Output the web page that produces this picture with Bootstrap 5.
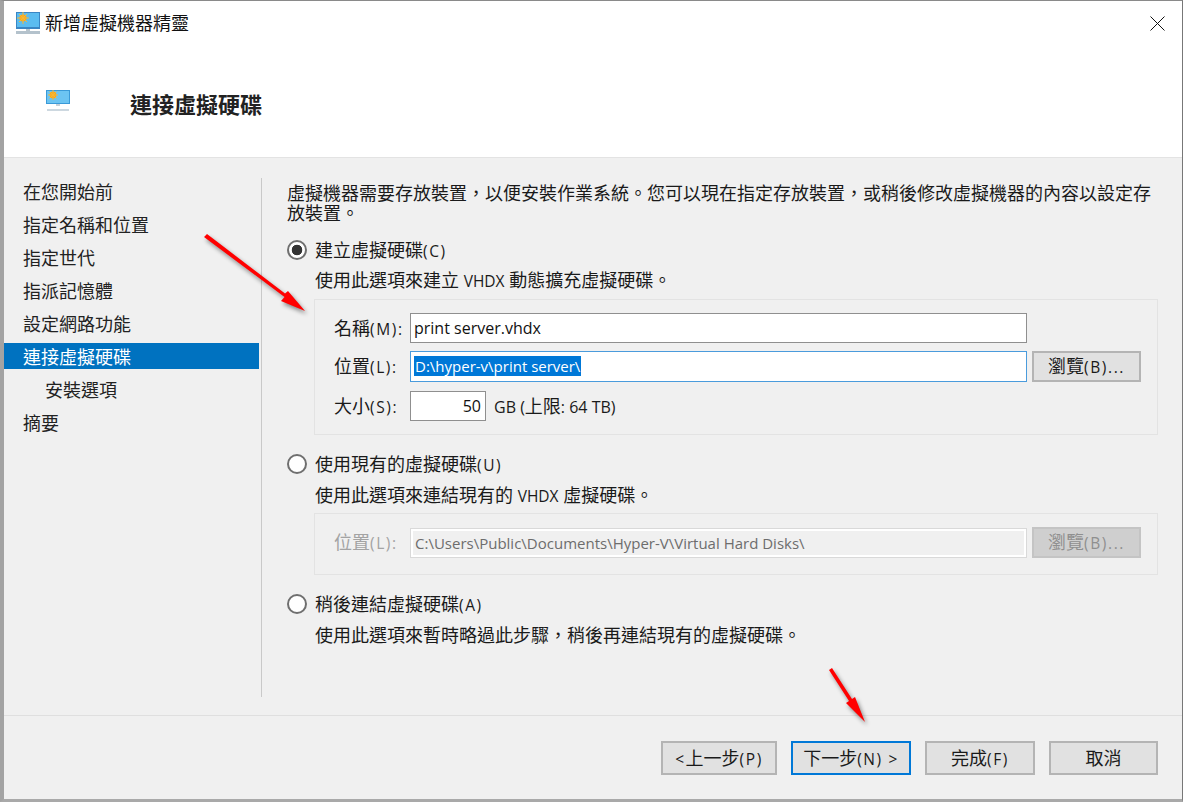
<!DOCTYPE html>
<html lang="zh-Hant">
<head>
<meta charset="utf-8">
<title>新增虛擬機器精靈</title>
<link href="https://cdn.jsdelivr.net/npm/bootstrap@5.3.0/dist/css/bootstrap.min.css" rel="stylesheet">
<style>
html,body{margin:0;height:802px;overflow:hidden;background:#fff}
body{font-family:"Open Sans","Noto Sans CJK TC",sans-serif;font-size:16px;line-height:20px;color:#1a1a1a;position:relative}
.wiz-frame{height:802px;border-style:solid;border-color:#8a8a8a #777 #a9a9a9 #a3a3a3;border-width:1px 1px 3px 4px;background:#f0f0f0;display:flex;flex-direction:column}
.wiz-head{height:157px;background:#fff;border-bottom:1px solid #e3e3e3;flex:none}
.wiz-title{padding:11px 17px 0 12px;height:44px;font-size:18px;line-height:22px;color:#111}
.wiz-title svg{margin-right:5px}
.wiz-title .wiz-x{width:15px;height:15px;margin:4px 0 0}
.wiz-sub{padding:46px 0 0 42px}
.wiz-sub svg{margin-right:60px;margin-top:-6px}
.wiz-h{font-size:22px;font-weight:700;line-height:26px;color:#222}
.wiz-body{height:558px;flex:none;border-bottom:1px solid #dfdfdf;padding:20px 0 18px}
.wiz-side{width:258px;flex:none;border-right:1px solid #c9c9c9;display:flex;flex-direction:column;gap:7px;padding-right:2px}
.wiz-step{height:26px;line-height:28px;padding-left:19px;font-size:18px;color:#222;white-space:nowrap}
.wiz-step.on{background:#0072c0;color:#fff}
.wiz-step.sub{padding-left:41px}
.wiz-main{width:871px;margin-left:25px;padding-top:5px}
.t18{font-size:18px;line-height:20px;white-space:nowrap}
.t18 i,.lat{font-style:normal;font-size:15.5px}
.wiz-mn{letter-spacing:1.6px}
.wiz-radio{height:20px}
.wiz-radio .form-check-input{width:20px;height:20px;margin:0 8px 0 0;float:none;flex:none;border:2px solid #6f6f6f;background:#fff;box-shadow:none;opacity:1}
.wiz-radio .form-check-input:checked{background-image:radial-gradient(circle,#333 0 5px,transparent 5.6px);background-color:#fff;border-color:#6f6f6f}
.wiz-desc{padding-left:28px}
.wiz-group{margin-left:27px;border:1px solid #e3e3e3;padding:13px 16px 0 19px}
.wiz-g1{height:136px;margin-top:8px}
.wiz-g2{height:62px;margin-top:7px}
.wiz-lbl{width:76px;flex:none;font-size:18px;white-space:nowrap}
.wiz-in.form-control{width:617px;height:30px;border:1px solid #8f8f8f;border-radius:0;background:#fff;padding:0 0 0 3px;font-size:16px;line-height:28px;color:#111;flex:none;white-space:nowrap;box-shadow:none}
.wiz-in.sel{height:31px;border-color:#4a9bdc;line-height:29px;font-size:15px}
.wiz-in.sel span{background:#0078d7;color:#fff;display:inline-block;line-height:20px;padding:0 1px}
.wiz-in.num{width:76px;text-align:right;padding-right:4px}
.wiz-in.off{background:#f0f0f0;border-color:#d9d9d9;box-shadow:inset 0 0 0 2px #fff;color:#6d6d6d;padding-left:4px;height:30px;font-size:15px}
.wiz-b.btn{--bs-btn-padding-y:0;--bs-btn-padding-x:0;border:2px solid #b4b4b4;border-radius:0;background:#e1e1e1;color:#1a1a1a;font-size:18px;line-height:28px;height:34px;white-space:nowrap;box-shadow:none}
.wiz-b.br{width:109px;height:31px;line-height:26px;margin-left:5px;flex:none}
.wiz-b.dis{background:#cfcfcf;border-color:#c4c4c4;color:#8f8f8f;opacity:1}
.wiz-b.main{border-color:#0078d7}
.wiz-off{color:#a3a3a3}
.wiz-foot{padding:25px 24px 0 0;gap:14px}
.wf1{width:116px}.wf2{width:120px}.wf3{width:110px}.wf4{width:109px}
.wiz-arrow{position:absolute;left:0;top:0;width:1183px;height:802px;pointer-events:none;filter:drop-shadow(2px 3px 2px rgba(0,0,0,.45))}
</style>
</head>
<body>
<div class="wiz-frame">
  <div class="wiz-head">
    <div class="wiz-title d-flex align-items-start">
      <svg width="24" height="23" viewBox="0 0 24 23"><rect width="24" height="17" fill="#3a86c4"/><rect x="1" y="1" width="22" height="14" fill="#5bbcf0"/><circle cx="7" cy="6" r="3.6" fill="#f4a71e"/><path d="M7 0v12M1 6h12M3 2l8 8M11 2l-8 8" stroke="#f7b733" stroke-width="1"/><rect y="17" width="24" height="2" fill="#fff"/><rect x="10" y="17" width="4" height="2" fill="#b8c4cc"/><rect x="0" y="19" width="24" height="3" fill="#b4c2cc"/></svg>
      <span class="flex-grow-1">新增虛擬機器精靈</span>
      <svg class="wiz-x" viewBox="0 0 15 15"><path d="M.5.5l14 14M14.500.5l-14 14" stroke="#111" stroke-width="1" fill="none"/></svg>
    </div>
    <div class="wiz-sub d-flex align-items-center">
      <svg width="24" height="22" viewBox="0 0 24 22"><rect width="24" height="14" fill="#3a9ad8"/><rect x="1" y="1" width="22" height="12" fill="#6cc4f2"/><circle cx="7" cy="5" r="3.4" fill="#f4a71e"/><path d="M7 0v10M2 5h10M3.500 1.500l7 7M10.500 1.500l-7 7" stroke="#f7b733" stroke-width="1"/><rect x="10" y="14" width="4" height="2" fill="#c5d0d8"/><rect x="1" y="19" width="22" height="2" fill="#cdd8e0"/></svg>
      <span class="wiz-h">連接虛擬硬碟</span>
    </div>
  </div>
  <div class="wiz-body d-flex">
    <div class="wiz-side">
      <div class="wiz-step">在您開始前</div>
      <div class="wiz-step">指定名稱和位置</div>
      <div class="wiz-step">指定世代</div>
      <div class="wiz-step">指派記憶體</div>
      <div class="wiz-step">設定網路功能</div>
      <div class="wiz-step on">連接虛擬硬碟</div>
      <div class="wiz-step sub">安裝選項</div>
      <div class="wiz-step">摘要</div>
    </div>
    <div class="wiz-main">
      <div class="t18">虛擬機器需要存放裝置，以便安裝作業系統。您可以現在指定存放裝置，或稍後修改虛擬機器的內容以設定存<br>放裝置。</div>
      <div class="wiz-radio d-flex align-items-center t18" style="margin-top:17px"><input class="form-check-input" type="radio" name="vd" checked><label>建立虛擬硬碟<i class="wiz-mn">(C)</i></label></div>
      <div class="wiz-desc t18" style="margin-top:10px">使用此選項來建立 <i>VHDX</i> 動態擴充虛擬硬碟。</div>
      <div class="wiz-group wiz-g1">
        <div class="d-flex align-items-center" style="margin-bottom:8px"><span class="wiz-lbl">名稱<i class="lat wiz-mn">(M):</i></span><div class="form-control wiz-in">print server.vhdx</div></div>
        <div class="d-flex align-items-center" style="margin-bottom:9px"><span class="wiz-lbl">位置<i class="lat wiz-mn">(L):</i></span><div class="form-control wiz-in sel"><span>D:\hyper-v\print server\</span></div><button class="btn wiz-b br" type="button">瀏覽<i class="lat wiz-mn">(B)...</i></button></div>
        <div class="d-flex align-items-center"><span class="wiz-lbl">大小<i class="lat wiz-mn">(S):</i></span><div class="form-control wiz-in num">50</div><span class="ms-2">GB (<span class="t18">上限</span>: 64 TB)</span></div>
      </div>
      <div class="wiz-radio d-flex align-items-center t18" style="margin-top:19px"><input class="form-check-input" type="radio" name="vd"><label>使用現有的虛擬硬碟<i class="wiz-mn">(U)</i></label></div>
      <div class="wiz-desc t18" style="margin-top:11px">使用此選項來連結現有的 <i>VHDX</i> 虛擬硬碟。</div>
      <div class="wiz-group wiz-g2">
        <div class="d-flex align-items-center"><span class="wiz-lbl wiz-off">位置<i class="lat wiz-mn">(L):</i></span><div class="form-control wiz-in off">C:\Users\Public\Documents\Hyper-V\Virtual Hard Disks\</div><button class="btn wiz-b br dis" type="button" disabled>瀏覽<i class="lat wiz-mn">(B)...</i></button></div>
      </div>
      <div class="wiz-radio d-flex align-items-center t18" style="margin-top:19px"><input class="form-check-input" type="radio" name="vd"><label>稍後連結虛擬硬碟<i class="wiz-mn">(A)</i></label></div>
      <div class="wiz-desc t18" style="margin-top:11px">使用此選項來暫時略過此步驟，稍後再連結現有的虛擬硬碟。</div>
    </div>
  </div>
  <div class="wiz-foot d-flex justify-content-end">
    <button class="btn wiz-b wf1" type="button"><i class="lat wiz-mn">&lt;</i>上一步<i class="lat wiz-mn">(P)</i></button>
    <button class="btn wiz-b main wf2" type="button">下一步<i class="lat wiz-mn">(N) &gt;</i></button>
    <button class="btn wiz-b wf3" type="button">完成<i class="lat wiz-mn">(F)</i></button>
    <button class="btn wiz-b wf4" type="button">取消</button>
  </div>
</div>
<svg class="wiz-arrow" viewBox="0 0 1183 802">
  <path d="M204 237L207 234L285 293.500L288 291L305 311L281 301L284.500 297Z" fill="#f00"/>
  <path d="M829 670L832 668L852 699L855 697L865 722L846 703L849 701Z" fill="#f00"/>
</svg>
</body>
</html>
